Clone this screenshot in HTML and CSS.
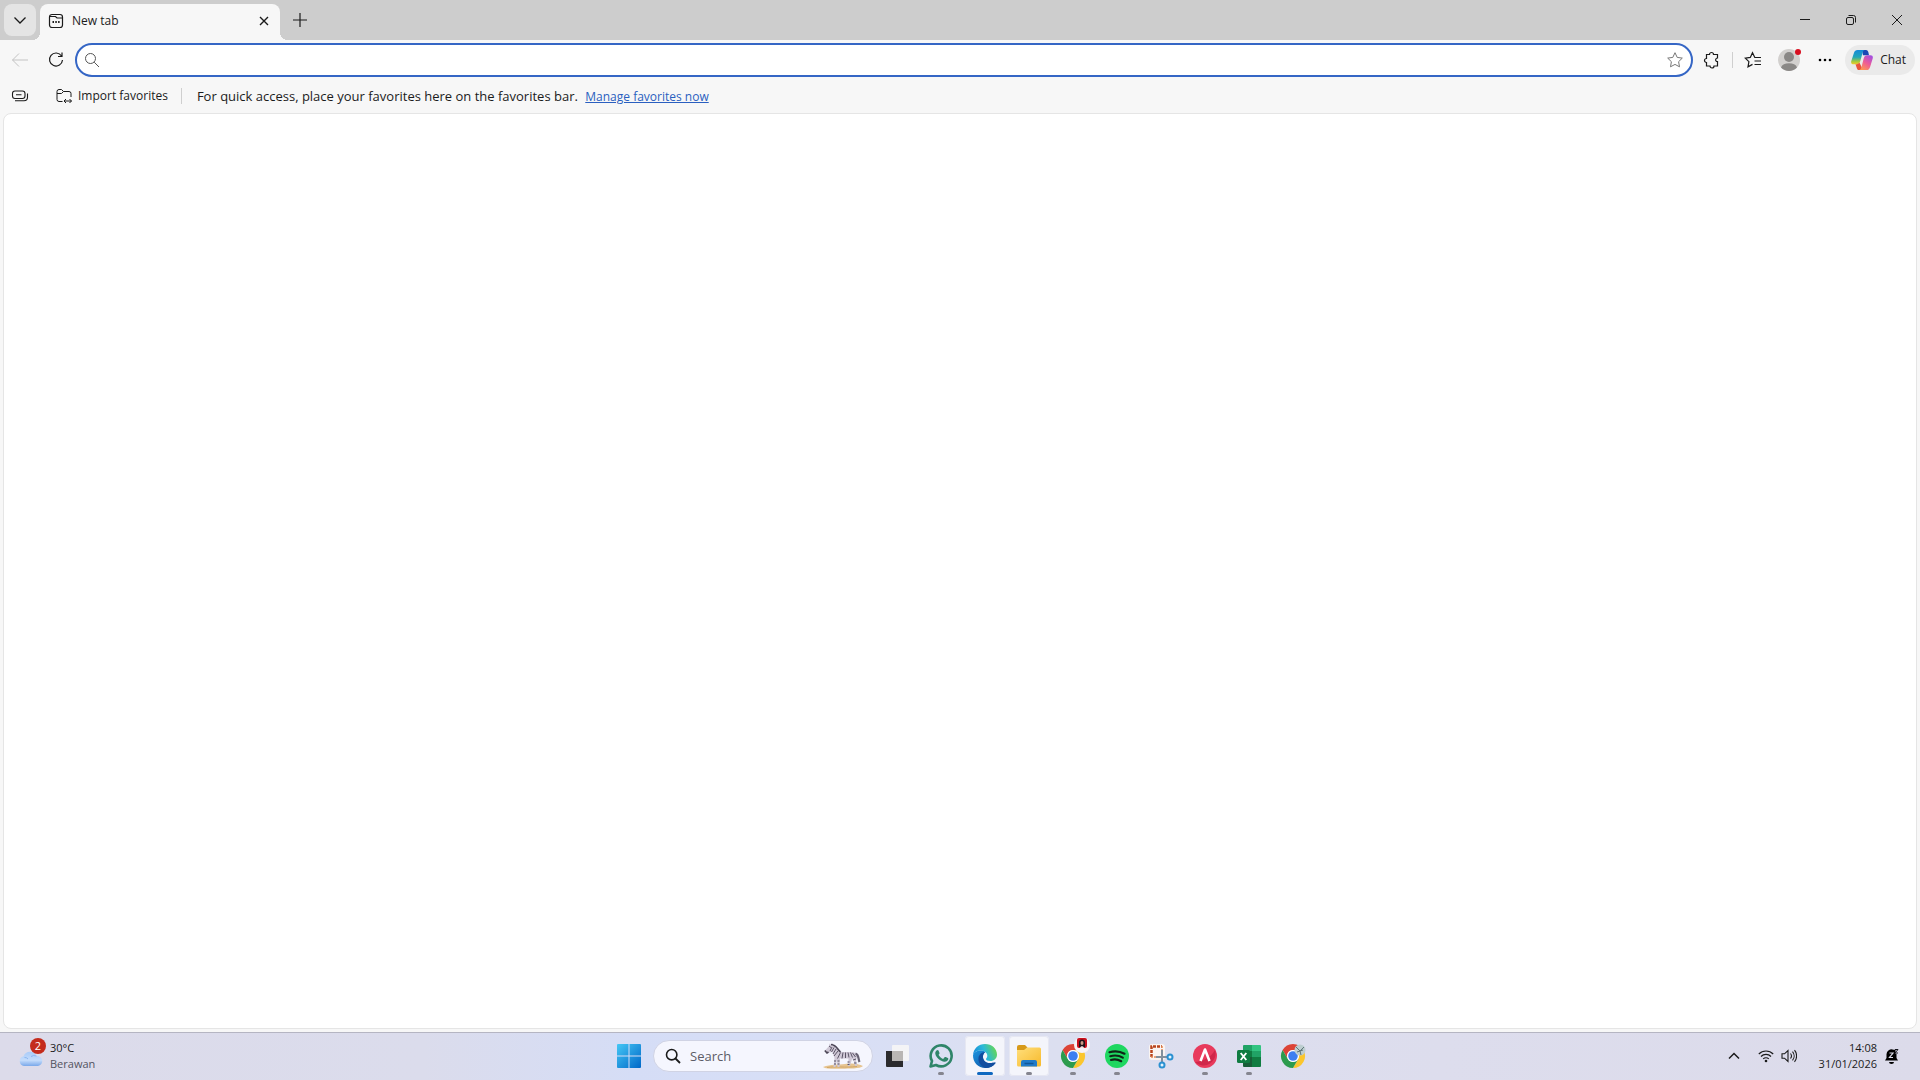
FILE: index.html
```html
<!DOCTYPE html>
<html lang="en">
<head>
    <meta charset="UTF-8">
    <meta name="viewport" content="width=device-width, initial-scale=1.0">
    <title>New tab</title>
    <link rel="stylesheet" href="styles.css">
</head>
<body>
    <div class="browser">
        <!-- Tab strip -->
        <header class="titlebar">
            <button class="tab-menu" type="button" aria-label="Tab actions">
                <svg class="icon" width="16" height="16" viewBox="0 0 16 16"><path d="M2.500 5.500 8 11l5.500-5.500" stroke-width="1.300"/></svg>
            </button>
            <div class="tab">
                <svg class="icon tab-icon" width="16" height="16" viewBox="0 0 16 16"><rect x="1.500" y="1.500" width="13" height="13" rx="2.500" stroke-width="1.200"/><path d="M1.500 3.500h6l1.500 1.500h5.500" stroke-width="1.200"/><path d="M4.500 9h1.500M7.300 9h1.500M10.100 9h1.500" stroke-width="1.800"/></svg>
                <span class="tab-title">New tab</span>
                <button class="tab-close" type="button" aria-label="Close tab">
                    <svg class="icon" width="10" height="10" viewBox="0 0 10 10"><path d="m1 1 8 8M9 1 1 9" stroke-width="1.400"/></svg>
                </button>
            </div>
            <button class="new-tab" type="button" aria-label="New tab">
                <svg class="icon" width="16" height="16" viewBox="0 0 16 16"><path d="M8 1v14M1 8h14" stroke-width="1.200"/></svg>
            </button>
            <div class="window-controls">
                <button type="button" aria-label="Minimize">
                    <svg class="icon" width="12" height="12" viewBox="0 0 12 12"><path d="M1 5.500h10"/></svg>
                </button>
                <button type="button" aria-label="Restore">
                    <svg class="icon" width="12" height="12" viewBox="0 0 12 12"><rect x="1.500" y="3.500" width="7" height="7" rx="1.500"/><path d="M3.500 1.500h5a2 2 0 0 1 2 2v5"/></svg>
                </button>
                <button type="button" aria-label="Close">
                    <svg class="icon" width="12" height="12" viewBox="0 0 12 12"><path d="m1 1 10 10M11 1 1 11"/></svg>
                </button>
            </div>
        </header>

        <!-- Address bar -->
        <div class="toolbar">
            <button class="tool" type="button" aria-label="Back" disabled>
                <svg class="icon" width="18" height="18" viewBox="0 0 18 18"><path d="M17 9H1.500M8 2.500 1.500 9 8 15.500"/></svg>
            </button>
            <button class="tool" type="button" aria-label="Refresh">
                <svg class="icon" width="18" height="18" viewBox="0 0 18 18"><path d="M14.500 5A6.500 6.500 0 1 0 15.500 9M15 1.500V5.500H11" stroke-width="1.200"/></svg>
            </button>
            <form class="address">
                <svg class="icon" width="16" height="16" viewBox="0 0 16 16"><circle cx="6.500" cy="6.500" r="5"/><path d="m10.200 10.200 4.800 4.800"/></svg>
                <input type="text" aria-label="Search or enter web address">
                <button class="star" type="button" aria-label="Add to favorites">
                    <svg class="icon" width="18" height="18" viewBox="0 0 18 18"><path d="m9 1.700 2.200 4.700 5.100.700-3.700 3.600.9 5.100L9 13.400l-4.500 2.400.9-5.100L1.700 7.100l5.100-.7z"/></svg>
                </button>
            </form>
            <button class="tool" type="button" aria-label="Extensions">
                <svg class="icon" width="18" height="18" viewBox="0 0 18 18"><path d="M3.500 3.500h3a2 2 0 1 1 4 0h4v3.500a1.900 1.900 0 0 0-1 3.500h1v4.500h-3.500a2 2 0 1 1-4 0H3.500v-3.500a2 2 0 1 1 0-4z" stroke-width="1.200"/></svg>
            </button>
            <span class="divider"></span>
            <button class="tool" type="button" aria-label="Favorites">
                <svg class="icon" width="18" height="18" viewBox="0 0 18 18"><path d="M12 6.500h-1.200L8.500 1.700 6.300 6.400l-5 .700 3.600 3.600-.9 5.100 4.500-2.400M11.500 6.500H17M10.500 10H17M10.500 13.500H17" stroke-width="1.200"/></svg>
            </button>
            <button class="tool" type="button" aria-label="Profile">
                <span class="avatar">
                    <svg width="22" height="22" viewBox="0 0 22 22"><circle cx="11" cy="11" r="11" fill="#d2d0ce"/><circle cx="11" cy="8" r="5" fill="#8a8886"/><path d="M3 18.500c1-3 4-4.300 8-4.300s7 1.300 8 4.300A11 11 0 0 1 3 18.500z" fill="#8a8886"/></svg>
                    <span class="alert-dot"></span>
                </span>
            </button>
            <button class="tool" type="button" aria-label="Settings and more">
                <svg width="14" height="4" viewBox="0 0 14 4"><circle cx="2" cy="2" r="1.300"/><circle cx="7" cy="2" r="1.300"/><circle cx="12" cy="2" r="1.300"/></svg>
            </button>
            <button class="chat" type="button">
                <svg width="22" height="22" viewBox="0 0 22 22">
                    <defs>
                        <linearGradient id="cop1" x1="0" y1="0" x2="0" y2="1"><stop offset="0" stop-color="#1689d8"/><stop offset=".5" stop-color="#22a7b8"/><stop offset=".8" stop-color="#a5c83d"/><stop offset="1" stop-color="#f3c928"/></linearGradient>
                        <linearGradient id="cop2" x1=".8" y1="0" x2=".2" y2="1"><stop offset="0" stop-color="#a34fe0"/><stop offset=".5" stop-color="#ee5b96"/><stop offset="1" stop-color="#ff9a4f"/></linearGradient>
                    </defs>
                    <path d="M11 1h4c1.500 0 2 1 2.400 2.400L18 6.200h-6z" fill="#1a48b5"/>
                    <path d="M6.500 1H14c-1.500 0-2 1.200-2.500 3L9.300 12c-.8 2.300-1.600 3.300-4 3.300H2.500C.5 15.300-.2 14 .3 12L3 3.800C3.700 1.800 4.700 1 6.500 1z" fill="url(#cop1)"/>
                    <path d="M4.500 15.300c2.200 0 3.200-.6 3.900-1.800l3 6.300c-.6.900-1.300 1.200-3.400 1.200-1.300 0-1.900-.9-2.300-2.300z" fill="#e8543c"/>
                    <path d="M15.500 21H8c1.500 0 2-1.200 2.500-3l2.200-8.500c.7-2.300 1.500-3.300 4-3.300h2.800c2 0 2.700 1.300 2.200 3.300L19 18.200c-.7 2-1.700 2.800-3.500 2.800z" fill="url(#cop2)"/>
                </svg>
                Chat
            </button>
        </div>

        <!-- Favorites bar -->
        <nav class="favorites">
            <button class="tool" type="button" aria-label="Collapse favorites">
                <svg class="icon" width="18" height="14" viewBox="0 0 18 14"><rect x="1.500" y="2" width="12.500" height="7.500" rx="2.500" stroke-width="1.100"/><path d="M5 5.700h5.500M4 11.700h9a3.500 3.500 0 0 0 3.500-3.500V4.500" stroke-width="1.100"/></svg>
            </button>
            <button class="import" type="button">
                <svg class="icon" width="16" height="16" viewBox="0 0 16 16"><path d="M6.500 13.500H3a2 2 0 0 1-2-2v-8a2 2 0 0 1 2-2h2.500l2 2H13a2 2 0 0 1 2 2V9M1 5.500h4.500l2-2M8 13h7.500M10 11l-2 2 2 2M13.500 11l2 2-2 2"/></svg>
                Import favorites
            </button>
            <span class="divider"></span>
            <p>For quick access, place your favorites here on the favorites bar. <a href="#">Manage favorites now</a></p>
        </nav>

        <main class="page"></main>
    </div>

    <!-- Taskbar -->
    <footer class="taskbar">
        <button class="weather" type="button">
            <span class="weather-icon">
                <svg width="26" height="18" viewBox="0 0 26 18">
                    <defs><linearGradient id="cloud" x1="0" y1="0" x2="0" y2="1"><stop offset="0" stop-color="#a9cbf8"/><stop offset=".6" stop-color="#c4dcfb"/><stop offset="1" stop-color="#79a8ea"/></linearGradient></defs>
                    <path d="M6 17a5 5 0 0 1-.5-9.800A7 7 0 0 1 18.500 7 5 5 0 0 1 20 17z" fill="url(#cloud)"/>
                    <path d="M6.500 8.500a4 4 0 0 1 3.500 1.500M13 7.500a6 6 0 0 1 5.500-.5" fill="none" stroke="#8ab5f1"/>
                </svg>
                <span class="badge">2</span>
            </span>
            <span class="weather-text"><span>30°C</span><span class="muted">Berawan</span></span>
        </button>

        <div class="apps">
            <button class="app" type="button" aria-label="Start">
                <svg width="24" height="24" viewBox="0 0 24 24">
                    <defs><linearGradient id="win" gradientUnits="userSpaceOnUse" x1="0" y1="0" x2="24" y2="24"><stop offset="0" stop-color="#45c7f5"/><stop offset="1" stop-color="#0067c8"/></linearGradient></defs>
                    <path d="M1 0h10.500v11.500H0V1a1 1 0 0 1 1-1zM12.500 0H23a1 1 0 0 1 1 1v10.500H12.500zM0 12.500h11.500V24H1a1 1 0 0 1-1-1zM12.500 12.500H24V23a1 1 0 0 1-1 1H12.500z" fill="url(#win)"/>
                </svg>
            </button>
            <label class="search">
                <svg class="icon" width="16" height="16" viewBox="0 0 16 16"><circle cx="6.700" cy="6.700" r="5.200" stroke-width="1.600"/><path d="m10.500 10.500 4.500 4.500" stroke-width="1.800"/></svg>
                <input type="text" placeholder="Search" aria-label="Search">
                <svg width="42" height="28" viewBox="0 0 42 28">
                    <path d="M1 25c8-3 15-2 22-3 8-1 14 0 18 2-3 3-14 2.500-21 2.700C11 27 4 27 1 25z" fill="#e6c491"/>
                    <path d="M5 25.500c9-1.500 18 .5 30-1" fill="none" stroke="#d2a665"/>
                    <path d="M3 8.500 7 4l.5-2.500L9 3l1.500-2 .8 2.500C15 5 17 9 20 10h9c4 0 6 2 6 5l-1 3 1 6h-2l-1.500-6-1.500-1-2 7h-2l.5-7.500H18L17.500 25h-2L15 18l-1.500 7h-2l1-9-2-6-3 .5-3 1z" fill="#cfc8d6"/>
                    <path d="M33.500 11.500c3.500 1 2.500 5 4 8.500" fill="none" stroke="#686273" stroke-width="2.200"/>
                    <path d="M2.800 8.500 5 11l1.500-1M9 2.500c6 .5 6 5 9.500 7.500" fill="none" stroke="#4b4656" stroke-width="1.600"/>
                    <path d="m7 4 2 1.500M10 5 8 9M12 5.500 9.500 10M14 7l-3 5M16 9l-4 5M18.500 10.500l-3 6M21 10.500l-1 6M23.500 10.500v5.500M26 10.500l1 5M28.500 10.500l2 5M30.500 11l3 4M12 19h2M12 22h2M15.500 19h2M15.500 22h2M25.500 20h2M25.500 22.500h2M31 18l3-1M32 21h2.500" fill="none" stroke="#5b5567"/>
                </svg>
            </label>
            <button class="app" type="button" aria-label="Task view">
                <svg width="24" height="24" viewBox="0 0 24 24"><rect x="7" y="1" width="17" height="16" rx="1" fill="#f4f4f6"/><path d="M1 7h17v16H2a1 1 0 0 1-1-1z" fill="#2b2b2d"/><path d="M7 7h11v10H7z" fill="#b9b6b4"/></svg>
            </button>
            <button class="app running" type="button" aria-label="WhatsApp">
                <svg width="26" height="26" viewBox="0 0 26 26"><path d="M2.500 23.500 4 18A10.500 10.500 0 1 1 8 22z" fill="none" stroke="#2f8569" stroke-width="2.600" stroke-linejoin="round"/><path d="M8.500 7.500c.7-.7 1.600-.8 2 .1l1 2.300c.2.500-.4 1.200-1 1.900 1 2 2.600 3.300 4.600 4.100l1.500-1.700c.3-.4.7-.3 1.100-.1l2.100 1c.7.400.6 1 .3 1.700-.6 1.400-2.200 2-3.600 1.900-4.200-.5-8.600-4.300-9.200-8-.2-1.200.3-2.400 1.200-3.200z" fill="#2f8569"/></svg>
            </button>
            <button class="app active" type="button" aria-label="Microsoft Edge">
                <svg width="26" height="26" viewBox="0 0 26 26">
                    <defs>
                        <linearGradient id="edge1" x1="0" y1=".6" x2="1" y2=".3"><stop offset="0" stop-color="#1687d9"/><stop offset=".5" stop-color="#2bb9d8"/><stop offset="1" stop-color="#69d84c"/></linearGradient>
                        <linearGradient id="edge2" x1="0" y1="0" x2="1" y2="1"><stop offset="0" stop-color="#1c93df"/><stop offset="1" stop-color="#0c4c9d"/></linearGradient>
                    </defs>
                    <path d="M1 12C1.500 5.500 6.500 1 13 1c7 0 12 4.800 12 10.500 0 4-3 6.500-6.500 6.500-3 0-4.500-1-4.500-2 0-.7 1.300-1.300 1.300-3.300C15.300 9.500 12 7.500 8.500 7.500 5 7.500 2 9.500 1 12z" fill="url(#edge1)"/>
                    <path d="M1 12c1-2.800 4-4.500 7.500-4.500 1.800 0 3.500.5 4.800 1.400C11.800 9.800 10.700 12 11 14.500c.4 3.400 3 5.600 6.700 5.600 2.500 0 4.100-.4 5.300-.6.400-.1.700.2.400.7C21 23.500 17.500 25 13.500 25 6 25 .7 19 1 12z" fill="url(#edge2)"/>
                    <path d="M13.300 8.900C11.800 9.800 10.700 12 11 14.500c.4 3.400 3 5.600 6.700 5.600 2.500 0 4.100-.4 5.300-.6.400-.1.700.2.400.7C20.900 23.400 17.400 25 13.500 25 8.500 23 6 19 6.500 15c.4-3.500 3-6 6.800-6.100z" fill="#124d9f"/>
                </svg>
            </button>
            <button class="app running opened" type="button" aria-label="File Explorer">
                <svg width="26" height="24" viewBox="0 0 26 24">
                    <defs><linearGradient id="folder" x1="0" y1="0" x2="1" y2="1"><stop offset="0" stop-color="#ffdf7c"/><stop offset="1" stop-color="#f7b92b"/></linearGradient></defs>
                    <path d="M1 3a2 2 0 0 1 2-2h6l2.500 2.500L9 7H1z" fill="#d79a1a"/>
                    <path d="M1 6h7l3-2.500h12.500A1.500 1.500 0 0 1 25 5v16a1.500 1.500 0 0 1-1.500 1.500h-21A1.500 1.500 0 0 1 1 21z" fill="url(#folder)"/>
                    <path d="M5 22.500V18a2 2 0 0 1 2-2h12a2 2 0 0 1 2 2v4.500z" fill="#217bc9"/><path d="M8.500 19.500h9" stroke="#105798" stroke-width="1.500"/>
                </svg>
            </button>
            <button class="app running" type="button" aria-label="Google Chrome">
                <svg width="26" height="26" viewBox="0 0 26 26"><path d="M2.600 7A12 12 0 0 1 23.400 7H13a6 6 0 0 0-5.200 9z" fill="#dc4336"/><path d="M23.400 7A12 12 0 0 1 13 25l5.200-9A6 6 0 0 0 13 7z" fill="#fbc62d"/><path d="M2.600 7A12 12 0 0 0 13 25l5.200-9A6 6 0 0 1 7.800 16z" fill="#2c9b4d"/><circle cx="13" cy="13" r="6" fill="#fff"/><circle cx="13" cy="13" r="4.800" fill="#3d7ff0"/></svg>
                <svg class="profile" width="16" height="16" viewBox="0 0 16 16"><circle cx="8" cy="8" r="8" fill="#f7f3f5"/><rect x="3" y="1" width="10" height="10" rx="2" fill="#c90f1c"/><path d="M5 10V5.500a3 3 0 0 1 6 0V10z" fill="#211317"/><ellipse cx="8" cy="6" rx="1.500" ry="2" fill="#cb9a86"/><path d="M6 11c.5-2.500 3.500-2.500 4 0z" fill="#efe4e2"/></svg>
            </button>
            <button class="app running" type="button" aria-label="Spotify">
                <svg width="24" height="24" viewBox="0 0 24 24"><circle cx="12" cy="12" r="12" fill="#1ed760"/><path d="M4.500 8.200c5-1.500 10.500-1 15 1.500M5.300 12.200c4.300-1.200 8.800-.7 12.500 1.400M6 16c3.500-1 7.200-.5 10.200 1.200" fill="none" stroke="#102417" stroke-width="2.200" stroke-linecap="round"/></svg>
            </button>
            <button class="app" type="button" aria-label="Snipping Tool">
                <svg width="26" height="26" viewBox="0 0 26 26"><rect x="1" y="1" width="16" height="16" rx="3" fill="#faf4f1"/><path d="M3.500 14V3.500H14" fill="none" stroke="#b9441d" stroke-width="2.500" stroke-dasharray="3 1"/><path d="M14 3v10M3 14h10" fill="none" stroke="#e38956" stroke-width="1.500" stroke-dasharray="2 1"/><path d="M14 7v12M8 14h12" fill="none" stroke="#82909d" stroke-width="2"/><circle cx="14" cy="22" r="2.500" fill="#e3f4fd" stroke="#2b91d1" stroke-width="2"/><circle cx="22" cy="14" r="2.500" fill="#e3f4fd" stroke="#2b91d1" stroke-width="2"/></svg>
            </button>
            <button class="app running" type="button" aria-label="Remote client">
                <svg width="24" height="24" viewBox="0 0 24 24"><circle cx="12" cy="12" r="12" fill="#e83a5c"/><path d="M2 18c6 0 16-4 20-12a12 12 0 0 1-20 12z" fill="#d0274a"/><path d="M7.500 17 12 5.500 16.500 17" fill="none" stroke="#fff" stroke-width="2.600" stroke-linejoin="round"/></svg>
            </button>
            <button class="app running" type="button" aria-label="Microsoft Excel">
                <svg width="26" height="24" viewBox="0 0 26 24"><path d="M8 1h8v6H7V2a1 1 0 0 1 1-1z" fill="#21a366"/><path d="M16 1h8a1 1 0 0 1 1 1v5h-9z" fill="#33c481"/><path d="M7 7h9v6H7z" fill="#107c41"/><path d="M16 7h9v6h-9z" fill="#21a366"/><path d="M7 13h9v10H8a1 1 0 0 1-1-1z" fill="#185c37"/><path d="M16 13h9v9a1 1 0 0 1-1 1h-8z" fill="#107c41"/><rect x="1" y="6" width="13" height="13" rx="1.500" fill="#107c41"/><path d="m4.700 9 5.600 7M10.300 9l-5.600 7" stroke="#fff" stroke-width="1.900"/></svg>
            </button>
            <button class="app" type="button" aria-label="Chrome profile">
                <svg width="26" height="26" viewBox="0 0 26 26"><path d="M2.600 7A12 12 0 0 1 23.400 7H13a6 6 0 0 0-5.200 9z" fill="#dc4336"/><path d="M23.400 7A12 12 0 0 1 13 25l5.200-9A6 6 0 0 0 13 7z" fill="#fbc62d"/><path d="M2.600 7A12 12 0 0 0 13 25l5.200-9A6 6 0 0 1 7.800 16z" fill="#2c9b4d"/><circle cx="13" cy="13" r="6" fill="#fff"/><circle cx="13" cy="13" r="4.800" fill="#3d7ff0"/><circle cx="20" cy="7" r="5.500" fill="#bdced0"/><path d="m16 4 4 4 4-4M20 8l1 4M17 9l6-2" fill="none" stroke="#61777a"/></svg>
            </button>
        </div>

        <div class="tray">
            <button class="tray-icon" type="button" aria-label="Show hidden icons">
                <svg class="icon" width="12" height="8" viewBox="0 0 12 8"><path d="m1 6.500 5-5 5 5" stroke-width="1.500"/></svg>
            </button>
            <button class="quick" type="button" aria-label="Network and volume">
                <svg class="icon" width="16" height="14" viewBox="0 0 16 14"><path d="M.8 5a10.200 10.200 0 0 1 14.400 0M3 7.500a7 7 0 0 1 10 0M5.200 9.900a4 4 0 0 1 5.600 0" stroke-width="1.200"/><circle cx="8" cy="12" r="1.300" fill="currentColor" stroke="none"/></svg>
                <svg class="icon" width="16" height="14" viewBox="0 0 16 14"><path d="M1 4.800h2.500L7 1.500v11L3.500 9.200H1zM9.500 4.500a4 4 0 0 1 0 5M11.500 2.700a6.500 6.500 0 0 1 0 8.600M13.500 1.200a9 9 0 0 1 0 11.600" stroke-width="1.100"/></svg>
            </button>
            <button class="clock" type="button"><span>14:08</span><span>31/01/2026</span></button>
            <button class="bell" type="button" aria-label="Notifications">
                <svg width="16" height="16" viewBox="0 0 16 16"><path d="M2.500 6.500a5 5 0 0 1 7-4.700h2V6h1V10l1.500 2.500H1L2.500 10z"/><path d="M5 14h5a2.500 2 0 0 1-5 0z"/><path d="M5.500 5h3.500l-3.500 4.500H9" fill="none" stroke="#dcdcea" stroke-width="1.200"/><path d="M11 1.500h3l-3 3.500h3" fill="none" stroke="#17171f"/></svg>
            </button>
        </div>
    </footer>
</body>
</html>
```
FILE: styles.css
```css
* {
    box-sizing: border-box;
}

body {
    margin: 0;
    min-height: 100vh;
    display: flex;
    flex-direction: column;
    font-family: "Open Sans", "Noto Sans", sans-serif;
    font-size: 12px;
    line-height: 16px;
    color: #1b1b1b;
    background-color: #f7f7f7;
}

button {
    display: flex;
    align-items: center;
    justify-content: center;
    padding: 0;
    border: none;
    background: none;
    font: inherit;
    color: inherit;
}

input {
    flex: 1;
    min-width: 0;
    padding: 0;
    border: none;
    outline: none;
    background: none;
    font: inherit;
}

svg {
    flex: none;
}

.icon {
    fill: none;
    stroke: currentColor;
}

.browser {
    flex: 1;
    display: flex;
    flex-direction: column;
}

/* tab strip */
.titlebar {
    display: flex;
    height: 40px;
    padding: 4px 0 0 4px;
    background-color: #cdcdcd;
}

.tab-menu {
    width: 32px;
    height: 32px;
    margin-right: 4px;
    border-radius: 8px;
    background-color: #e4e4e4;
}

.tab {
    position: relative;
    display: flex;
    align-items: center;
    width: 240px;
    padding: 0 8px 3px;
    border-radius: 8px 8px 0 0;
    background-color: #f7f7f7;
}

/* flared feet of the active tab */
.tab::before,
.tab::after {
    content: "";
    position: absolute;
    bottom: 0;
    width: 8px;
    height: 8px;
}

.tab::before {
    left: -8px;
    background: radial-gradient(circle at 0 0, transparent 8px, #f7f7f7 8px);
}

.tab::after {
    right: -8px;
    background: radial-gradient(circle at 100% 0, transparent 8px, #f7f7f7 8px);
}

.tab-title {
    flex: 1;
    padding-left: 8px;
}

.tab-close {
    width: 16px;
    height: 16px;
}

.new-tab {
    width: 40px;
    height: 32px;
}

.window-controls {
    display: flex;
    margin-left: auto;
}

.window-controls button {
    width: 46px;
    height: 32px;
}

/* address bar */
.toolbar {
    display: flex;
    align-items: center;
    height: 40px;
    padding: 0 5px 0 4px;
}

.tool {
    width: 32px;
    height: 32px;
}

.toolbar .tool {
    margin-right: 4px;
}

.tool:disabled {
    color: #c3c3c3;
}

.address {
    flex: 1;
    display: flex;
    align-items: center;
    height: 34px;
    margin-left: -1px;
    margin-right: 3px;
    padding: 0 7px;
    border: 2px solid #3566c5;
    border-radius: 17px;
    background-color: #fff;
    color: #555;
}

.star {
    width: 18px;
    height: 18px;
    color: #777;
}

.divider {
    width: 1px;
    height: 16px;
    background-color: #cfcfcf;
}

.toolbar .divider {
    margin-right: 4px;
}

.avatar {
    position: relative;
    display: flex;
}

.alert-dot {
    position: absolute;
    top: 0;
    right: -1px;
    width: 6px;
    height: 6px;
    border-radius: 50%;
    background-color: #d80f20;
}

.chat {
    gap: 7px;
    height: 30px;
    padding: 0 9px 0 6px;
    border-radius: 15px;
    background-color: #eaeaea;
}

/* favorites bar */
.favorites {
    display: flex;
    align-items: center;
    height: 32px;
    padding-left: 4px;
}

.favorites p {
    margin: 0 0 0 15px;
    font-size: 13px;
}

.favorites a {
    margin-left: 4px;
    font-size: 12px;
    color: #2a5fc0;
}

.import {
    gap: 6px;
    margin: 0 13px 0 20px;
}

.page {
    flex: 1;
    margin: 1px 3px 3px;
    border: 1px solid #e5e5e5;
    border-radius: 8px;
    background-color: #fff;
}

/* taskbar */
.taskbar {
    display: grid;
    grid-template-columns: 1fr auto 1fr;
    align-items: center;
    height: 48px;
    box-shadow: inset 0 1px #b5b5c2;
    background: linear-gradient(90deg, #dcdbea 0%, #dbdcec 22%, #d5ddf6 33%, #d8dff6 43%, #dcdff0 55%, #dddded 75%, #dcdbea 100%);
}

.weather {
    justify-self: start;
    gap: 6px;
    padding-left: 18px;
    text-align: left;
}

.weather-icon {
    position: relative;
    display: flex;
    padding-top: 4px;
}

.badge {
    position: absolute;
    top: -7px;
    right: -2px;
    width: 16px;
    height: 16px;
    border-radius: 50%;
    background-color: #c42b1c;
    color: #fff;
    font-size: 11px;
    text-align: center;
}

.weather-text,
.clock {
    display: flex;
    flex-direction: column;
    font-size: 11px;
}

.muted {
    color: #53535f;
}

.apps {
    display: flex;
    align-items: center;
    gap: 4px;
    padding-left: 2px;
}

.app {
    position: relative;
    width: 40px;
    height: 40px;
    border-radius: 4px;
}

.active,
.opened {
    background-color: #f4f5fb;
    box-shadow: inset 0 0 0 1px #e6e7f2;
}

.running::after,
.active::after {
    content: "";
    position: absolute;
    bottom: 1px;
    left: 50%;
    width: 6px;
    height: 3px;
    margin-left: -3px;
    border-radius: 2px;
    background-color: #85858f;
}

.active::after {
    width: 16px;
    margin-left: -8px;
    background-color: #0f68c0;
}

.profile {
    position: absolute;
    top: 1px;
    right: 3px;
}

.search {
    display: flex;
    align-items: center;
    gap: 9px;
    width: 220px;
    height: 32px;
    padding: 0 8px 0 11px;
    border: 1px solid #d0d3e4;
    border-radius: 16px;
    background-color: #f5f6fe;
    font-size: 13px;
}

.search input::placeholder {
    color: #5c5c66;
    opacity: 1;
}

.tray {
    display: flex;
    align-items: center;
    justify-self: end;
    padding-right: 20px;
}

.tray-icon {
    width: 32px;
    height: 40px;
}

.quick {
    gap: 7px;
    height: 40px;
    padding: 0 8px;
}

.clock {
    align-items: flex-end;
    margin-left: 14px;
}

.bell {
    margin-left: 7px;
}
```
